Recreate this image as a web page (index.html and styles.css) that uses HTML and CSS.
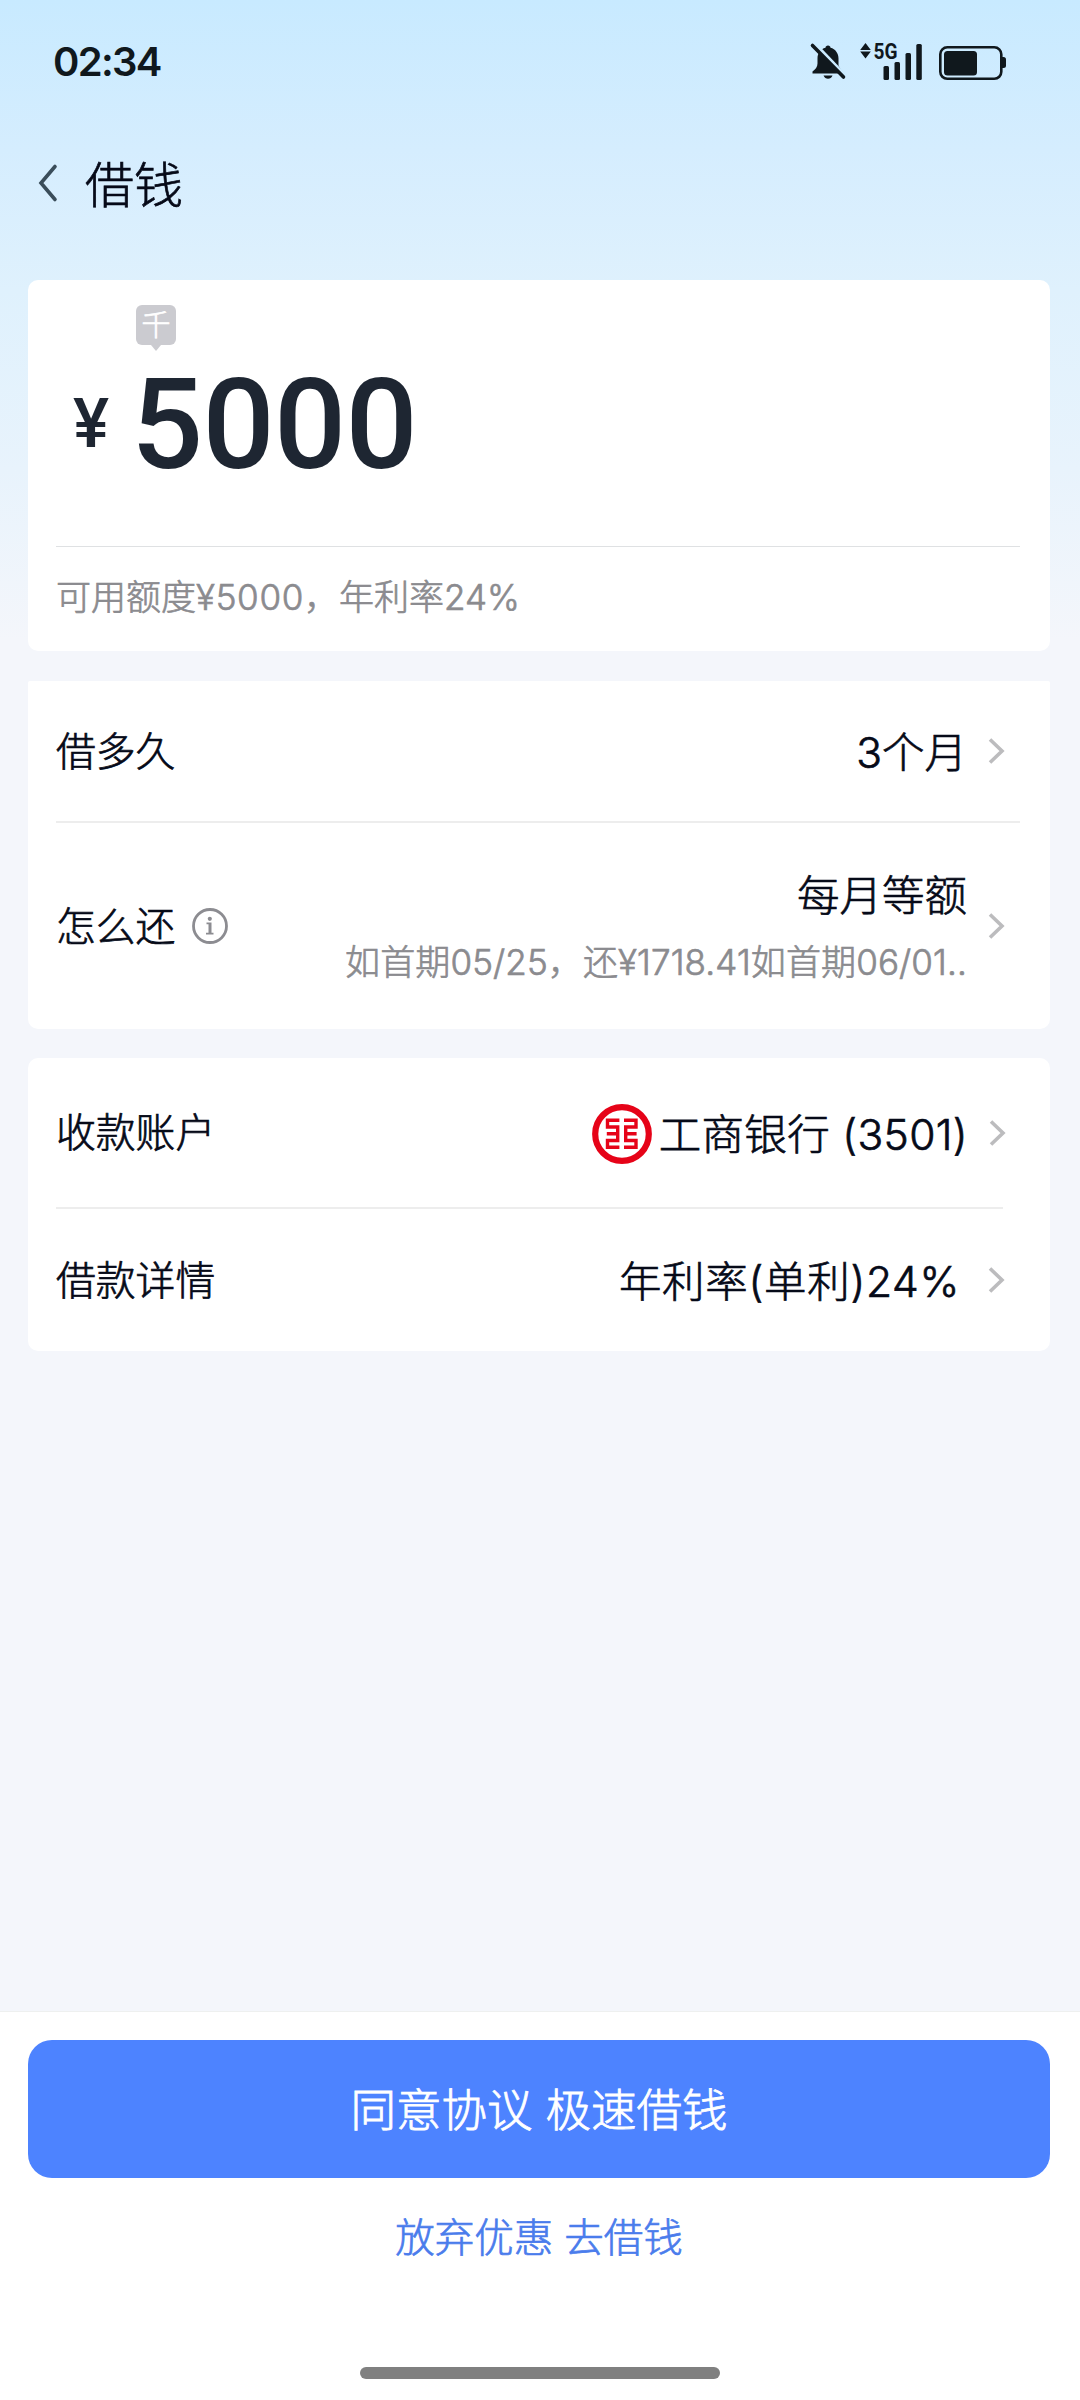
FILE: index.html
```html
<!DOCTYPE html>
<html lang="zh-CN">
<head>
<meta charset="utf-8">
<title>借钱</title>
<link rel="stylesheet" href="styles.css">
</head>
<body>
<div class="page">
  <header class="status">
    <span class="clock">02:34</span>
    <svg class="status-icons" width="200" height="64" viewBox="808 30 200 64" fill="#10181d">
      <path d="M828 45.500c1.500 0 2.500 1 2.500 2.200 5 1.300 8 5.500 8 10.800v7l3.500 6v2H812.500v-2c3-2 5-5 5-8v-5c0-5.300 3-9.500 8-10.800 0-1.200 1-2.200 2.500-2.200z"/>
      <path d="M823.500 75.500h9c-1 2.200-2.500 3.200-4.500 3.200s-3.500-1-4.500-3.200z"/>
      <path d="M814.500 43.500L846 76.500" stroke="#cbebff" stroke-width="3.500"/>
      <path d="M812.500 45.500L843.500 77" stroke="#10181d" stroke-width="3.600" stroke-linecap="round"/>
      <path d="M865.500 43l5.300 7h-10.600zM865.500 58.500l5.300-7h-10.600z"/>
      <text class="net" x="873.500" y="59" textLength="24" lengthAdjust="spacingAndGlyphs">5G</text>
      <rect x="883.500" y="66" width="5.500" height="14" rx="1.500"/>
      <rect x="894.500" y="62" width="5.500" height="18" rx="1.500"/>
      <rect x="905.500" y="53" width="5.500" height="27" rx="1.500"/>
      <rect x="916.300" y="44" width="5.500" height="36" rx="1.500"/>
      <rect x="940.300" y="47.300" width="61" height="31.500" rx="7" fill="none" stroke="#10181d" stroke-width="2.600"/>
      <rect x="944" y="51" width="33" height="24.500" rx="3.500"/>
      <path d="M1002 57h1.500a2.500 2.500 0 0 1 2.500 2.500v6a2.500 2.500 0 0 1-2.500 2.500H1002z"/>
    </svg>
  </header>

  <nav class="nav">
    <svg class="back" width="22" height="40" viewBox="0 0 22 40"><path d="M18 3.500L4 20l14 16.500"/></svg>
    <h1 class="title">借钱</h1>
  </nav>

  <main class="content">
    <section class="card amount-card">
      <div class="unit">千</div>
      <div class="amount"><span class="yen">¥</span><span class="value">5000</span></div>
      <p class="quota">可用额度<span class="digits">¥5000</span>，年利率24%</p>
    </section>

    <section class="card plan-card">
      <div class="row term">
        <span class="label">借多久</span>
        <span class="val">3个月</span>
        <svg class="chev" width="18" height="28" viewBox="0 0 18 28"><path d="M3 2.500L15 14 3 25.500"/></svg>
      </div>
      <div class="row repay">
        <span class="label">怎么还</span>
        <svg class="info" width="38" height="38" viewBox="0 0 38 38"><circle cx="19" cy="19" r="16.500" fill="none" stroke="#8c8c91" stroke-width="2.800"/><g fill="#8c8c91"><circle cx="18.800" cy="11.800" r="2.100"/><path d="M15.500 15.500h5v10.200h2v1.800h-7.500v-1.800h2.500v-8.400h-2z"/></g></svg>
        <div class="val stack">
          <span>每月等额</span>
          <small class="hint">如首期05/25，还¥1718.41如首期06/01..</small>
        </div>
        <svg class="chev" width="18" height="28" viewBox="0 0 18 28"><path d="M3 2.500L15 14 3 25.500"/></svg>
      </div>
    </section>

    <section class="card account-card">
      <div class="row bank">
        <span class="label">收款账户</span>
        <svg class="logo" width="60" height="60" viewBox="0 0 60 60" fill="none" stroke="#e60318">
          <circle cx="30" cy="30" r="26.800" stroke-width="6.200"/>
          <path stroke-width="3.400" d="M27.400 16.300H15.500v6.700h10.200v13.500H15.500v6.700h11.900M14.800 29.700h10.900M32 16.300h12v6.700H33.700v13.500H44v6.700H32M33.700 29.700h10.900"/>
        </svg>
        <span class="val bank-val">工商银行 <span class="num">(3501)</span></span>
        <svg class="chev" width="18" height="28" viewBox="0 0 18 28"><path d="M3 2.500L15 14 3 25.500"/></svg>
      </div>
      <div class="row detail">
        <span class="label">借款详情</span>
        <span class="val">年利率(单利)24%</span>
        <svg class="chev" width="18" height="28" viewBox="0 0 18 28"><path d="M3 2.500L15 14 3 25.500"/></svg>
      </div>
    </section>
  </main>

  <footer class="footer">
    <button class="primary">同意协议 极速借钱</button>
    <a class="secondary">放弃优惠 去借钱</a>
    <div class="home"></div>
  </footer>
</div>
</body>
</html>
```
FILE: styles.css
```css
* { box-sizing: border-box; }
body {
  margin: 0;
  font-family: Inter, "Noto Sans CJK SC", sans-serif;
  font-weight: 300;
  color: #060a18;
  -webkit-text-stroke: 0.7px currentColor;
}
.page {
  display: flex;
  flex-direction: column;
  width: 1080px;
  height: 2400px;
  background: linear-gradient(#c8eaff 0, #d5edfe 150px, #dff1fd 290px, #e8f3fc 470px, #f4f6fb 640px);
}
.status {
  display: flex;
  justify-content: space-between;
  align-items: center;
  height: 124px;
  padding: 0 72px 0 53px;
  -webkit-text-stroke: 0;
}
.clock { padding-bottom: 2px; font-size: 40px; font-weight: 600; letter-spacing: -1.7px; color: #10181d; }
.net { font: 700 22px Roboto, sans-serif; }
.nav {
  display: flex;
  align-items: center;
  height: 156px;
  padding: 0 0 38px 37px;
}
.back path { fill: none; stroke: #3a4d5a; stroke-width: 3.6; stroke-linecap: round; }
.title { margin: 0 0 0 26px; padding-top: 6px; font-size: 49px; font-weight: 300; line-height: 60px; }
.content { flex: 1; padding: 0 30px 0 28px; }
.card { background: #fff; border-radius: 10px; padding: 0 30px 0 28px; }
.amount-card { height: 371px; padding-top: 25px; margin-bottom: 30px; }
.unit {
  position: relative;
  width: 40px;
  height: 40px;
  margin-left: 80px;
  border-radius: 6px;
  background: #cbcbd0;
  color: #fff;
  font-size: 29px;
  line-height: 41px;
  text-align: center;
}
.unit::after {
  content: "";
  position: absolute;
  left: 15px;
  top: 40px;
  border: 5px solid transparent;
  border-top: 6px solid #cbcbd0;
  border-bottom: 0;
}
.amount {
  display: flex;
  height: 202px;
  font-family: Roboto, sans-serif;
  font-weight: 500;
  color: #1e2632;
  border-bottom: 1px solid #dfe1e3;
  -webkit-text-stroke: 0;
}
.yen { width: 75px; padding-left: 17px; font-size: 68px; line-height: 158px; }
.value { font-size: 127px; line-height: 159px; letter-spacing: -0.7px; }
.quota { margin: 0; font-size: 35px; line-height: 100px; color: #8b8b8f; }
.digits { letter-spacing: 0.7px; }
.plan-card { height: 348px; margin-bottom: 29px; border-radius: 2px 2px 10px 10px; }
.row { display: flex; align-items: center; }
.label { padding-bottom: 5px; font-size: 39.8px; }
.val { margin-left: auto; padding-bottom: 4px; font-size: 42.5px; white-space: nowrap; }
.chev { margin: 0 15px 0 20px; flex: none; }
.chev path { fill: none; stroke: #bcbcbe; stroke-width: 3.6; }
.term { height: 142px; border-bottom: 2px solid #ededed; }
.repay { height: 206px; }
.info { margin-left: 16px; }
.stack { display: flex; flex-direction: column; align-items: flex-end; padding: 5px 0 0; line-height: 66px; }
.hint { font-size: 35px; color: #8b8b8f; line-height: 66px; letter-spacing: 0.12px; }
.account-card { height: 293px; }
.bank { height: 151px; margin-right: 17px; border-bottom: 2px solid #ededed; }
.bank .chev { margin-right: -3px; }
.logo { margin: 2px 7px 0 auto; }
.bank-val { margin-left: 0; padding-bottom: 3px; letter-spacing: 0.35px; }
.bank .label { padding-bottom: 6px; }
.detail { height: 142px; }
.detail .val { letter-spacing: 0.7px; }
.detail .chev { margin-left: 27px; }
.footer {
  display: flex;
  flex-direction: column;
  align-items: center;
  height: 389px;
  padding: 28px 30px 0 28px;
  background: #fff;
  border-top: 1px solid #eef0ef;
}
.primary {
  width: 100%;
  height: 138px;
  padding: 0 0 5px;
  border: 0;
  border-radius: 24px;
  background: #4d83ff;
  color: #fff;
  font: inherit;
  font-size: 45.5px;
  -webkit-text-stroke: 0.8px #fff;
}
.secondary { font-size: 39.5px; line-height: 120px; color: #4a7cec; }
.home { width: 360px; height: 12px; margin: 69px 0 0 2px; border-radius: 6px; background: #808080; }
```
